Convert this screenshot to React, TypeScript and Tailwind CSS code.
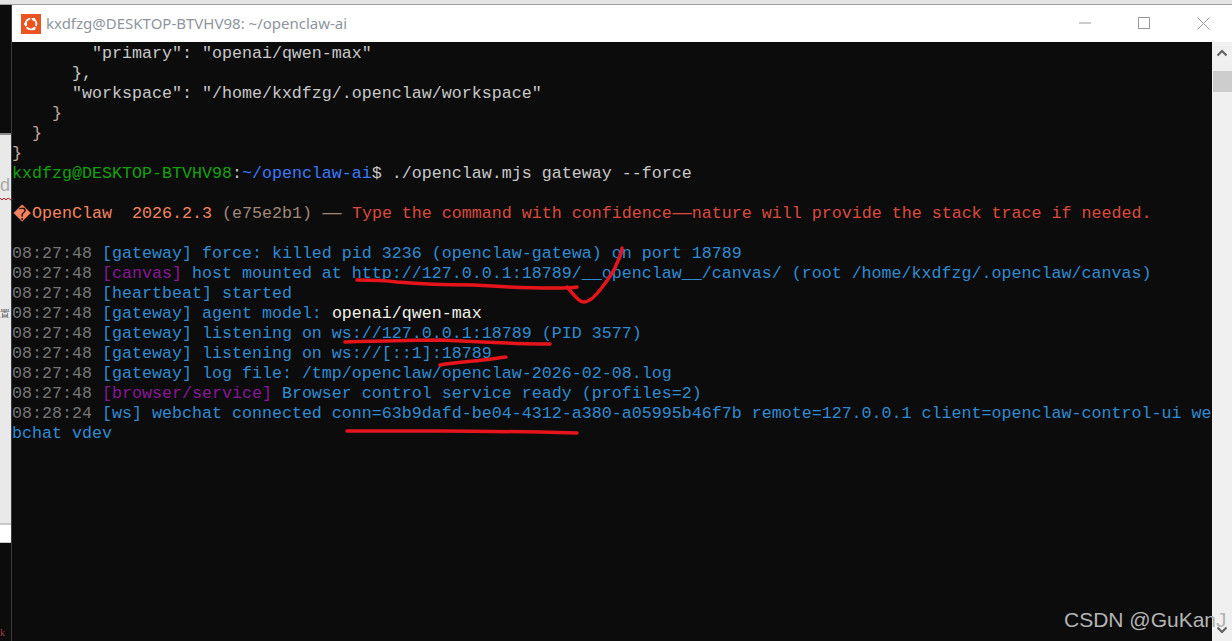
const time = "text-[#767676]"
const blue = "text-[#2f8bd2]"
const purple = "text-[#881798]"

type Seg = [string, string]

const logLines: Seg[][] = [
    [["08:27:48 ", time], ["[gateway] force: killed pid 3236 (openclaw-gatewa) on port 18789", blue]],
    [["08:27:48 ", time], ["[canvas]", purple], [" host mounted at http://127.0.0.1:18789/__openclaw__/canvas/ (root /home/kxdfzg/.openclaw/canvas)", blue]],
    [["08:27:48 ", time], ["[heartbeat] started", blue]],
    [["08:27:48 ", time], ["[gateway] agent model: ", blue], ["openai/qwen-max", "text-[#f2f2e8]"]],
    [["08:27:48 ", time], ["[gateway] listening on ws://127.0.0.1:18789 (PID 3577)", blue]],
    [["08:27:48 ", time], ["[gateway] listening on ws://[::1]:18789", blue]],
    [["08:27:48 ", time], ["[gateway] log file: /tmp/openclaw/openclaw-2026-02-08.log", blue]],
    [["08:27:48 ", time], ["[browser/service]", purple], [" Browser control service ready (profiles=2)", blue]],
    [["08:28:24 ", time], ["[ws] webchat connected conn=63b9dafd-be04-4312-a380-a05995b46f7b remote=127.0.0.1 client=openclaw-control-ui we", blue]],
    [["bchat vdev", blue]],
]

function Line({ segs }: { segs: Seg[] }) {
    return (
        <div className="h-5 whitespace-pre">
            {segs.map(([text, color], i) => (
                <span key={i} className={color}>{text}</span>
            ))}
        </div>
    )
}

// the terminal font draws the em dash over two cells
function Dash({ color }: { color: string }) {
    return <span className={`inline-block w-5 text-center scale-x-[1.9] ${color}`}>—</span>
}

function UbuntuLogo() {
    return (
        <svg width="20" height="20" viewBox="0 0 20 20" className="shrink-0">
            <rect width="20" height="20" fill="#e95420" />
            <circle cx="10" cy="10" r="5.4" fill="none" stroke="#fff" strokeWidth="1.8" />
            <g stroke="#e95420" strokeWidth="1.4">
                <line x1="10" y1="10" x2="10" y2="3" />
                <line x1="10" y1="10" x2="16" y2="13.5" />
                <line x1="10" y1="10" x2="4" y2="13.5" />
            </g>
            <circle cx="4.6" cy="10" r="1.5" fill="#fff" />
            <circle cx="12.8" cy="5.2" r="1.5" fill="#fff" />
            <circle cx="12.8" cy="14.8" r="1.5" fill="#fff" />
        </svg>
    )
}

function WindowControls() {
    return (
        <div className="ml-auto flex items-center pr-[22px] gap-[46px]">
            <svg width="13" height="13" viewBox="0 0 13 13" className="shrink-0">
                <line x1="0" y1="6" x2="12" y2="6" stroke="#999" strokeWidth="1" />
            </svg>
            <svg width="13" height="13" viewBox="0 0 13 13" className="shrink-0">
                <rect x="0.5" y="0.5" width="11" height="11" fill="none" stroke="#999" strokeWidth="1" />
            </svg>
            <svg width="13" height="13" viewBox="0 0 13 13" className="shrink-0">
                <path d="M0.5 0.5L12.5 12.5M12.5 0.5L0.5 12.5" fill="none" stroke="#999" strokeWidth="1" />
            </svg>
        </div>
    )
}

function Scrollbar() {
    return (
        <div className="w-5 shrink-0 bg-[#f0f0f0] flex flex-col items-center">
            <svg width="10" height="8" viewBox="0 0 10 8" className="mt-[7px] mb-[14px]">
                <path d="M0.5 6.5L5 2L9.5 6.5" fill="none" stroke="#606060" strokeWidth="2" />
            </svg>
            <div className="ml-px w-[19px] h-[21px] bg-[#cdcdcd]" />
            <svg width="10" height="8" viewBox="0 0 10 8" className="mt-auto mb-[7px]">
                <path d="M0.5 1.5L5 6L9.5 1.5" fill="none" stroke="#606060" strokeWidth="2" />
            </svg>
        </div>
    )
}

function LeftStrip() {
    return (
        <div className="w-[11px] shrink-0 flex flex-col overflow-hidden">
            <div className="h-[128px] bg-[#0c0c0c]" />
            <div className="h-[390px] bg-[#e9e9e9] border-t-2 border-[#8a8a8a] overflow-hidden font-['Liberation_Sans',sans-serif] text-[#aaaaaa]">
                <div className="mt-[39px] text-[18px] leading-[22px]">d</div>
                <svg width="11" height="6" viewBox="0 0 11 6" className="block">
                    <path d="M0 2L2 4L4 2L6 4L8 2L11 4" fill="none" stroke="#e8141c" strokeWidth="1" />
                </svg>
                <div className="mt-[104px] text-[10px] leading-4 text-[#555555]">置</div>
            </div>
            <div className="h-5 bg-white border-t-2 border-b border-[#c8c8c8]" />
            <div className="flex-1 bg-[#0c0c0c] relative">
                <span className="absolute left-0 bottom-0 leading-4 text-[10px] text-[#a04040] font-['Liberation_Serif',serif]">k</span>
            </div>
        </div>
    )
}

export default function App() {
    return (
        <div className="relative w-[1232px] h-[641px] overflow-hidden bg-[#0c0c0c] flex flex-col">
            <div className="h-[5px] shrink-0 bg-[#e4e4e4] border-b border-[#a0a0a0]" />
            <div className="flex-1 flex min-h-0">
                <LeftStrip />
                <div className="w-px shrink-0 bg-[#3a3a3a]" />
                <div className="flex-1 flex flex-col min-w-0">
                    <div className="h-[37px] shrink-0 bg-white flex items-center pl-[9px] gap-[5px]">
                        <UbuntuLogo />
                        <span className="text-[15px] text-[#8e959c] font-['Noto_Sans',sans-serif] whitespace-pre">kxdfzg@DESKTOP-BTVHV98: ~/openclaw-ai</span>
                        <WindowControls />
                    </div>
                    <div className="flex-1 flex min-h-0">
                        <div className="flex-1 min-w-0 overflow-hidden pt-[2px] font-['Liberation_Mono',monospace] text-[16.67px] leading-5 text-[#c8c8c8]">
                            <Line segs={[["        \"primary\": \"openai/qwen-max\"", ""]]} />
                            <Line segs={[["      },", ""]]} />
                            <Line segs={[["      \"workspace\": \"/home/kxdfzg/.openclaw/workspace\"", ""]]} />
                            <Line segs={[["    }", "text-[#c4a8a0]"]]} />
                            <Line segs={[["  }", "text-[#c4a8a0]"]]} />
                            <Line segs={[["}", "text-[#c4a8a0]"]]} />
                            <Line segs={[["kxdfzg@DESKTOP-BTVHV98", "text-[#13a10e]"], [":", ""], ["~/openclaw-ai", "text-[#3b78ff]"], ["$ ./openclaw.mjs gateway --force", ""]]} />
                            <div className="h-5" />
                            <div className="h-5 whitespace-pre flex">
                                <span className="w-5 text-center text-[#f4845f] font-['DejaVu_Sans',sans-serif] text-[17px]">�</span>
                                <span className="text-[#f4845f]">OpenClaw  2026.2.3 </span>
                                <span className="text-[#a08878]">(e75e2b1) </span>
                                <Dash color="text-[#a08878]" />
                                <span> </span>
                                <span className="text-[#dc4a3e]">Type the command with confidence</span>
                                <Dash color="text-[#dc4a3e]" />
                                <span className="text-[#dc4a3e]">nature will provide the stack trace if needed.</span>
                            </div>
                            <div className="h-5" />
                            {logLines.map((segs, i) => (
                                <Line key={i} segs={segs} />
                            ))}
                        </div>
                        <Scrollbar />
                    </div>
                </div>
            </div>

            {/* red pen marks on top of the screenshot */}
            <svg className="absolute inset-0 pointer-events-none" width="1232" height="641" viewBox="0 0 1232 641" fill="none" stroke="#e8141c" strokeWidth="3.5" strokeLinecap="round" strokeLinejoin="round">
                <path d="M357 280C375 280 390 281 397 282C420 284 450 285 473 285C505 287 530 288 553 288C565 288 572 288 577 287" />
                <path d="M567 287C572 292 578 302 583 302C590 302 595 296 600 290C608 280 614 272 617 263C620 257 622 252 622 248" />
                <path d="M345 342C380 341 410 340 440 340C465 341 485 342 507 343C520 344 535 344 550 344" />
                <path d="M440 365C450 363 462 362 473 361C485 360 497 358 506 357" />
                <path d="M347 431C380 431 410 431 440 431C490 431 535 432 577 433" />
            </svg>

            <span className="absolute left-[1064px] top-[607px] text-[21px] leading-[26px] text-[#b4b4b4] font-['Liberation_Sans',sans-serif] whitespace-pre">CSDN @GuKanJ</span>
        </div>
    )
}
